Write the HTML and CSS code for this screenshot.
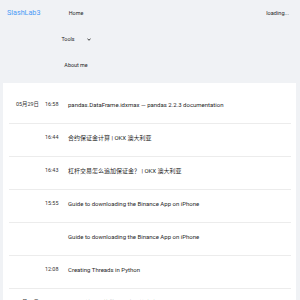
FILE: index.html
```html
<!DOCTYPE html>
<html>
<head>
<meta charset="utf-8">
<link rel="stylesheet" href="styles.css">
</head>
<body>
<header class="header">
  <div class="logo">SlashLab3</div>
  <nav class="nav">
    <div class="nav-item">Home</div>
    <div class="nav-item nav-sub">Tools <svg class="chev" width="4" height="3" viewBox="0 0 4 3"><path d="M0.5 0.6 L2 2.3 L3.5 0.6" fill="none" stroke="#333" stroke-width="0.9"/></svg></div>
    <div class="nav-item">About me</div>
  </nav>
  <div class="spacer"></div>
  <div class="loading">loading...</div>
</header>
<main class="card">
  <div class="row"><span class="date">05月29日</span><span class="time">16:58</span><span class="title">pandas.DataFrame.idxmax — pandas 2.2.3 documentation</span></div>
  <div class="row"><span class="date"></span><span class="time">16:44</span><span class="title">合约保证金计算 | OKX 澳大利亚</span></div>
  <div class="row"><span class="date"></span><span class="time">16:43</span><span class="title">杠杆交易怎么追加保证金？ | OKX 澳大利亚</span></div>
  <div class="row"><span class="date"></span><span class="time">15:55</span><span class="title">Guide to downloading the Binance App on iPhone</span></div>
  <div class="row"><span class="date"></span><span class="time"></span><span class="title">Guide to downloading the Binance App on iPhone</span></div>
  <div class="row"><span class="date"></span><span class="time">12:08</span><span class="title">Creating Threads in Python</span></div>
  <div class="row"><span class="date">05月28日</span><span class="time">17:34</span><span class="title">项目1-效果一款批量图片压缩去水印工具</span></div>
</main>
</body>
</html>
```
FILE: styles.css
```css
html, body {
  margin: 0;
  padding: 0;
  background: #f0f2f5;
  font-family: Roboto, "Noto Sans CJK SC", sans-serif;
  color: #262626;
  overflow: hidden;
  height: 300px;
}
.header {
  display: flex;
  align-items: flex-start;
  height: 83px;
  padding: 0 0 0 7px;
  box-sizing: border-box;
}
.logo {
  color: #4a9bf5;
  font-size: 7.2px;
  line-height: 26px;
  width: 36px;
}
.nav {
  display: flex;
  flex-direction: column;
  align-items: center;
  width: 66px;
}
.nav-item {
  font-size: 5.4px;
  line-height: 26px;
  height: 26px;
}
.nav-sub {
  display: flex;
  align-items: center;
  gap: 12px;
}
.chev { display: block; }
.spacer { flex: 1; }
.loading {
  font-size: 5.6px;
  line-height: 26px;
  margin-right: 11px;
}
.card {
  background: #fff;
  margin: 0 4px 0 3px;
  padding: 8px 5px 0 6px;
  height: 300px;
}
.row {
  display: flex;
  align-items: flex-start;
  height: 22px;
  padding-top: 10px;
  border-bottom: 1px solid #ececec;
  line-height: 7px;
}
.date {
  width: 36px;
  padding-left: 7px;
  box-sizing: border-box;
  white-space: nowrap;
  font-size: 5.4px;
  color: #333;
}
.time {
  width: 23px;
  font-size: 5.4px;
  color: #333;
}
.title {
  font-size: 6px;
  white-space: nowrap;
  color: #1f1f1f;
}
```
